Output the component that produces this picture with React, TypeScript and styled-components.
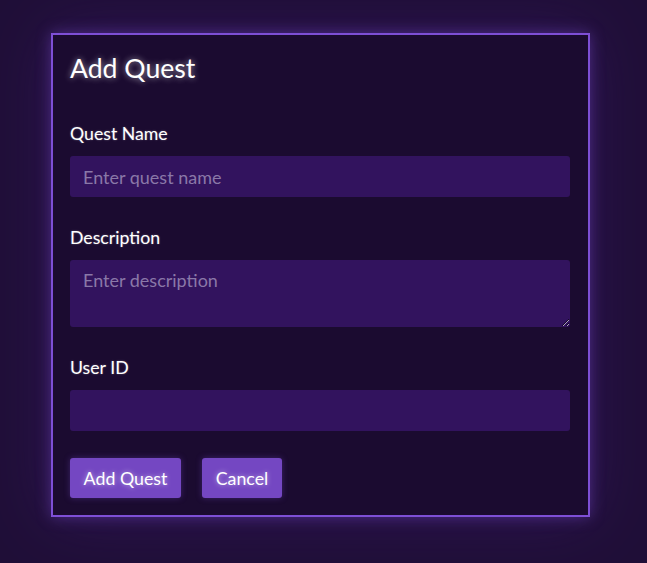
import React from "react";
import styled, { createGlobalStyle } from "styled-components";

const Global = createGlobalStyle`
  html, body {
    margin: 0;
    padding: 0;
    background: #200f38;
    font-family: Lato, "Noto Sans", sans-serif;
  }
  * { box-sizing: border-box; }
`;

const Page = styled.div`
  min-height: 563px;
  padding: 33px 57px 40px 51px;
  background: #200f38;
`;

const Card = styled.div`
  width: 539px;
  border: 2px solid #7e4fd6;
  background: #1b0b30;
  padding: 17px 18px 17px 17px;
  box-shadow: 0 0 14px rgba(126, 79, 214, 0.45), 0 0 60px rgba(60, 25, 110, 0.5);
`;

const Title = styled.h2`
  margin: 0 0 40px;
  font-size: 26.6px;
  line-height: 32px;
  font-weight: 400;
  color: #ffffff;
  text-shadow: 0 0 6px rgba(255, 255, 255, 0.6);
`;

const Field = styled.div<{ $last?: boolean }>`
  display: flex;
  flex-direction: column;
  margin-bottom: ${(p) => (p.$last ? "27px" : "31px")};
`;

const Label = styled.label`
  display: block;
  font-size: 17.7px;
  line-height: 20px;
  font-weight: 400;
  color: #ffffff;
  text-shadow: 0 0 2px rgba(255, 255, 255, 0.35);
  margin-bottom: 12px;
`;

const inputStyles = `
  width: 500px;
  border: none;
  outline: none;
  border-radius: 3px;
  background: #32135e;
  color: #ffffff;
  font-family: Lato, "Noto Sans", sans-serif;
  font-size: 18px;
  padding: 0 13px;
  &::placeholder { color: #8a78a8; }
`;

const Input = styled.input`
  ${inputStyles}
  height: 41px;
`;

const TextArea = styled.textarea`
  ${inputStyles}
  height: 67px;
  padding-top: 10px;
  line-height: 21px;
  display: block;
`;

const Actions = styled.div`
  display: flex;
  gap: 21px;
`;

const Button = styled.button<{ $w: number }>`
  width: ${(p) => p.$w}px;
  height: 40px;
  border: none;
  border-radius: 3px;
  background: #7447c2;
  color: #ffffff;
  font-family: Lato, "Noto Sans", sans-serif;
  font-size: 17.8px;
  font-weight: 400;
  text-shadow: 0 0 5px rgba(255, 255, 255, 0.55);
  box-shadow: 0 0 6px rgba(126, 79, 214, 0.35);
  cursor: pointer;
  padding: 0;
`;

export default function App() {
  return (
    <>
      <Global />
      <Page>
        <Card>
          <Title>Add Quest</Title>
          <Field>
            <Label>Quest Name</Label>
            <Input placeholder="Enter quest name" />
          </Field>
          <Field>
            <Label>Description</Label>
            <TextArea placeholder="Enter description" />
          </Field>
          <Field $last>
            <Label>User ID</Label>
            <Input />
          </Field>
          <Actions>
            <Button $w={111}>Add Quest</Button>
            <Button $w={80}>Cancel</Button>
          </Actions>
        </Card>
      </Page>
    </>
  );
}
